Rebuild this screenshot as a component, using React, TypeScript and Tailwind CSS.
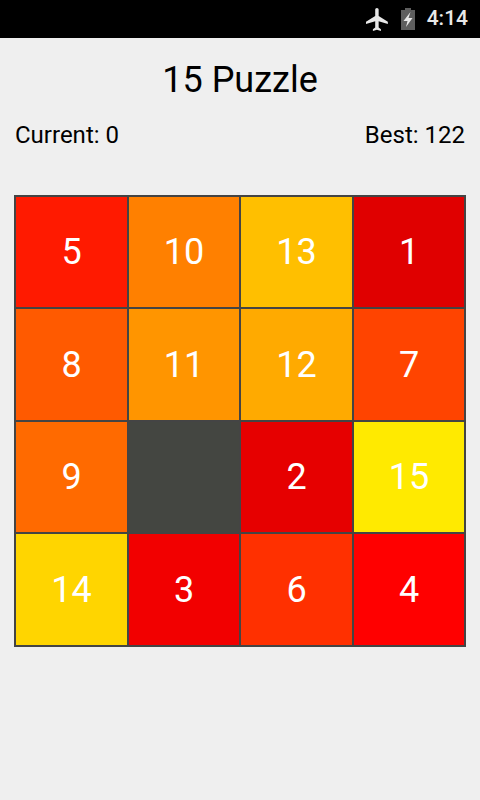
const tiles = [
  { n: "5", c: "bg-[#ff1a00]" },
  { n: "10", c: "bg-[#ff8000]" },
  { n: "13", c: "bg-[#ffbf00]" },
  { n: "1", c: "bg-[#e00000]" },
  { n: "8", c: "bg-[#ff5a00]" },
  { n: "11", c: "bg-[#ff9500]" },
  { n: "12", c: "bg-[#ffaa00]" },
  { n: "7", c: "bg-[#ff4400]" },
  { n: "9", c: "bg-[#ff6a00]" },
  { n: "", c: "bg-[#444641]" },
  { n: "2", c: "bg-[#e60000]" },
  { n: "15", c: "bg-[#ffea00]" },
  { n: "14", c: "bg-[#ffd500]" },
  { n: "3", c: "bg-[#f20000]" },
  { n: "6", c: "bg-[#ff3000]" },
  { n: "4", c: "bg-[#ff0000]" },
];

const App = () => {
  return (
    <div className="w-[480px] h-[800px] flex flex-col bg-[#efefef] font-['Roboto',sans-serif] overflow-hidden">
      <div className="h-[38px] bg-black flex items-center justify-end pr-[12px]">
        <svg width="23" height="23" viewBox="2 2 20 20" className="mr-[12px]" fill="#e8e8e8">
          <path d="M21 16v-2l-8-5V3.500C13 2.670 12.330 2 11.500 2S10 2.670 10 3.500V9l-8 5v2l8-2.500V19l-2 1.500V22l3.500-1 3.500 1v-1.500L13 19v-5.500z" />
        </svg>
        <svg width="14" height="22" viewBox="0 0 14 22" className="mr-[12px]">
          <path d="M4 0h6v2h4v20H0V2h4z" fill="#5e5e5e" />
          <path d="M9.500 4 2.500 13h4l-1.500 6 6.500-9h-4z" fill="#e8e8e8" />
        </svg>
        <span className="text-[21px] font-medium text-[#e8e8e8]">4:14</span>
      </div>
      <h1 className="text-[36px] text-black text-center mt-[20px] leading-[44px]">15 Puzzle</h1>
      <div className="flex justify-between px-[15px] mt-[19px] text-[24px] text-black leading-[28px]">
        <span>Current: 0</span>
        <span>Best: 122</span>
      </div>
      <div className="mx-[14px] mt-[46px] w-[452px] h-[452px] border-2 border-[#444444] bg-[#444444] grid grid-cols-[111px_110px_111px_110px] grid-rows-[110px_111px_110px_111px] gap-[2px]">
        {tiles.map((t) => (
          <div key={t.n} className={`${t.c} flex items-center justify-center text-white text-[36px]`}>
            {t.n}
          </div>
        ))}
      </div>
    </div>
  );
};

export default App;
